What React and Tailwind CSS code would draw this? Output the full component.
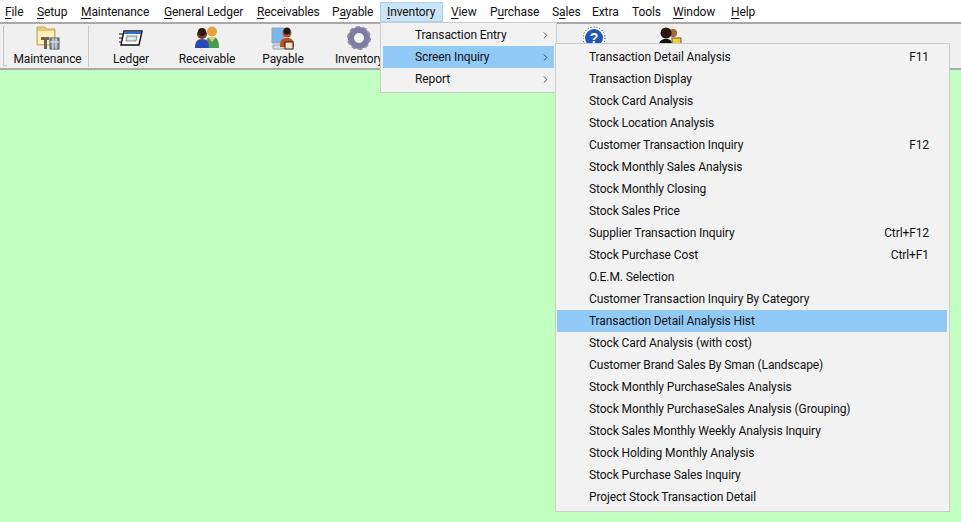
import React from 'react'
import { ChevronRight } from 'lucide-react'

const menus = [
  { key: 'file', pre: '', u: 'F', post: 'ile', w: 'w-[32px]' },
  { key: 'setup', pre: '', u: 'S', post: 'etup', w: 'w-[44px]' },
  { key: 'maint', pre: '', u: 'M', post: 'aintenance', w: 'w-[83px]' },
  { key: 'gl', pre: '', u: 'G', post: 'eneral Ledger', w: 'w-[93px]' },
  { key: 'recv', pre: '', u: 'R', post: 'eceivables', w: 'w-[75px]' },
  { key: 'pay', pre: 'P', u: 'a', post: 'yable', w: 'w-[48px]' },
  { key: 'inv', pre: '', u: 'I', post: 'nventory', w: 'w-[63px] pl-[6px] mr-[8px] bg-[#cce4f7] border border-[#a8d2f2]' },
  { key: 'view', pre: '', u: 'V', post: 'iew', w: 'w-[39px]' },
  { key: 'purchase', pre: 'P', u: 'u', post: 'rchase', w: 'w-[62px]' },
  { key: 'sales', pre: 'S', u: 'a', post: 'les', w: 'w-[40px]' },
  { key: 'extra', pre: 'Extra', u: '', post: '', w: 'w-[40px]' },
  { key: 'tools', pre: 'Tools', u: '', post: '', w: 'w-[41px]' },
  { key: 'window', pre: '', u: 'W', post: 'indow', w: 'w-[58px]' },
  { key: 'help', pre: '', u: 'H', post: 'elp', w: 'w-[40px]' },
]

const inquiryItems = [
  ['Transaction Detail Analysis', 'F11'],
  ['Transaction Display'],
  ['Stock Card Analysis'],
  ['Stock Location Analysis'],
  ['Customer Transaction Inquiry', 'F12'],
  ['Stock Monthly Sales Analysis'],
  ['Stock Monthly Closing'],
  ['Stock Sales Price'],
  ['Supplier Transaction Inquiry', 'Ctrl+F12'],
  ['Stock Purchase Cost', 'Ctrl+F1'],
  ['O.E.M. Selection'],
  ['Customer Transaction Inquiry By Category'],
  ['Transaction Detail Analysis Hist'],
  ['Stock Card Analysis (with cost)'],
  ['Customer Brand Sales By Sman (Landscape)'],
  ['Stock Monthly PurchaseSales Analysis'],
  ['Stock Monthly PurchaseSales Analysis (Grouping)'],
  ['Stock Sales Monthly Weekly Analysis Inquiry'],
  ['Stock Holding Monthly Analysis'],
  ['Stock Purchase Sales Inquiry'],
  ['Project Stock Transaction Detail'],
]

const FolderIcon = () => (
  <svg width="24" height="24" viewBox="0 0 24 24">
    <path d="M1 1h8l2 2h8v16H1z" fill="#e8c878" stroke="#c9a95a" />
    <path d="M2 5h16v13H2z" fill="#fbeeb8" />
    <rect x="14" y="12" width="9" height="11" fill="#8b98a3" stroke="#4a5560" />
    <path d="M17 12v11M20 12v11M14 16h9" stroke="#e6ebee" />
    <path d="M5 11h8v3h-2v9H8v-9H5z" fill="#6b6052" />
  </svg>
)

const LedgerIcon = () => (
  <svg width="24" height="24" viewBox="0 0 24 24">
    <path d="M5 5h18l-3 14H2z" fill="#fff" stroke="#111" strokeWidth="1.4" />
    <path d="M5.5 5.5h17l-.8 2.5H4.8z" fill="#2f6fd0" />
    <path d="M8 10h10l-1 5H7z" fill="#dfe6ee" stroke="#555" strokeWidth=".7" />
    <path d="M0 8h4M0 12h3M0 16h3" stroke="#111" strokeWidth="1" />
  </svg>
)

const ReceivableIcon = () => (
  <svg width="24" height="24" viewBox="0 0 24 24">
    <circle cx="17" cy="5.5" r="5" fill="#e9a23b" />
    <path d="M10 22c0-8 2-11 7-11s7 3 7 11z" fill="#4a9c4d" />
    <path d="M13 11h8l-4 5z" fill="#f3c46d" />
    <circle cx="7" cy="8" r="5" fill="#7a3b1c" />
    <circle cx="7" cy="6" r="4" fill="#2b1a10" />
    <path d="M0 22c0-6 2-9 7-9s7 3 7 9z" fill="#2a49b5" />
  </svg>
)

const PayableIcon = () => (
  <svg width="24" height="24" viewBox="0 0 24 24">
    <path d="M1 2h12v15H1z" fill="#7db6ee" stroke="#9aa4ae" />
    <path d="M2 19h11v4H2z" fill="#d9dde1" stroke="#9aa4ae" />
    <circle cx="16" cy="7" r="4.5" fill="#a5532a" />
    <circle cx="16" cy="5" r="3.5" fill="#2a1710" />
    <path d="M9 21c0-7 2-9 7-9s7 2 7 9z" fill="#b84f22" />
    <rect x="14" y="16" width="8" height="7" fill="#f2e3c4" stroke="#301a10" />
  </svg>
)

const GearIcon = () => (
  <svg width="24" height="24" viewBox="0 0 24 24">
    <circle cx="12" cy="12" r="8" fill="none" stroke="#7f7c9f" strokeWidth="6" />
    <circle cx="12" cy="12" r="11" fill="none" stroke="#8e8bac" strokeWidth="2" strokeDasharray="4 2.9" />
    <circle cx="12" cy="12" r="4.5" fill="#f5f5f5" />
  </svg>
)

const HelpIcon = () => (
  <svg width="24" height="24" viewBox="0 0 24 24">
    <circle cx="11" cy="12" r="11" fill="#fff" stroke="#222" strokeDasharray="1 2" />
    <circle cx="11" cy="12" r="9" fill="#1f57b8" />
    <text x="11" y="17" textAnchor="middle" fontSize="14" fontWeight="700" fill="#fff" fontFamily="Liberation Sans, sans-serif">?</text>
  </svg>
)

const PeopleIcon = () => (
  <svg width="24" height="24" viewBox="0 0 24 24">
    <circle cx="14" cy="7" r="4" fill="#a5632f" />
    <circle cx="7" cy="7" r="5.5" fill="#2a1710" />
    <path d="M0 20c0-5 2-7 7-7s6 2 6 7z" fill="#111" />
    <rect x="13" y="12" width="9" height="9" fill="#e9cf3c" stroke="#6b5a10" />
  </svg>
)

const ToolButton = ({ icon, label, className }) => (
  <div className={`flex flex-col items-center shrink-0 ${className}`}>
    <div className="h-[24px] flex items-center justify-center">{icon}</div>
    <span className="mt-[1px] leading-[16px] whitespace-nowrap">{label}</span>
  </div>
)

const App = () => {
  return (
    <div className="relative w-[961px] h-[522px] flex flex-col overflow-hidden bg-[#c1ffc1] text-[12px] tracking-[-0.1px] text-[#111] font-['Roboto',sans-serif]">
      {/* Menu bar */}
      <div className="h-[22px] bg-white flex items-end pl-[5px] shrink-0">
        {menus.map((m) => (
          <div key={m.key} className={`h-[20px] flex items-center whitespace-nowrap shrink-0 ${m.w}`}>
            <span>
              {m.pre}
              <span className="underline underline-offset-2">{m.u}</span>
              {m.post}
            </span>
          </div>
        ))}
      </div>

      {/* Toolbar */}
      <div className="h-[48px] shrink-0 bg-[#f0f0f0] border-t-2 border-b-2 border-[#a9a9a9] flex items-start pt-[2px]">
        <div className="w-[4px] h-[40px] ml-[3px] border-l border-b border-[#c4c4c4] shrink-0" />
        <ToolButton icon={<FolderIcon />} label="Maintenance" className="w-[81px]" />
        <div className="w-px h-[41px] bg-[#c9c9c9] shrink-0" />
        <div className="w-[4px] shrink-0" />
        <ToolButton icon={<LedgerIcon />} label="Ledger" className="w-[76px]" />
        <ToolButton icon={<ReceivableIcon />} label="Receivable" className="w-[76px]" />
        <ToolButton icon={<PayableIcon />} label="Payable" className="w-[76px]" />
        <ToolButton icon={<GearIcon />} label="Inventory" className="w-[76px]" />
        <div className="w-[160px] shrink-0" />
        <ToolButton icon={<HelpIcon />} label="" className="w-[76px]" />
        <ToolButton icon={<PeopleIcon />} label="" className="w-[76px]" />
      </div>

      {/* Workspace */}
      <div className="flex-1 bg-[#c1ffc1]" />

      {/* Inventory dropdown */}
      <div className="absolute left-[380px] top-[22px] w-[177px] bg-[#f2f2f2] border border-[#cccccc] p-[2px] pt-[1px]">
        {['Transaction Entry', 'Screen Inquiry', 'Report'].map((label) => (
          <div
            key={label}
            className={`h-[22px] flex items-center justify-between pl-[32px] pr-[3px] ${label === 'Screen Inquiry' ? 'bg-[#91c9f7]' : ''}`}
          >
            <span>{label}</span>
            <ChevronRight size={11} strokeWidth={1.5} />
          </div>
        ))}
      </div>

      {/* Screen Inquiry submenu */}
      <div className="absolute left-[555px] top-[43px] w-[395px] h-[469px] bg-[#f2f2f2] border border-[#cccccc] py-[2px] pl-[1px] pr-[2px]">
        {inquiryItems.map(([label, shortcut]) => (
          <div
            key={label}
            className={`h-[22px] flex items-center justify-between pl-[32px] pr-[18px] ${label === 'Transaction Detail Analysis Hist' ? 'bg-[#91c9f7]' : ''}`}
          >
            <span>{label}</span>
            {shortcut && <span>{shortcut}</span>}
          </div>
        ))}
      </div>
    </div>
  )
}

export default App
